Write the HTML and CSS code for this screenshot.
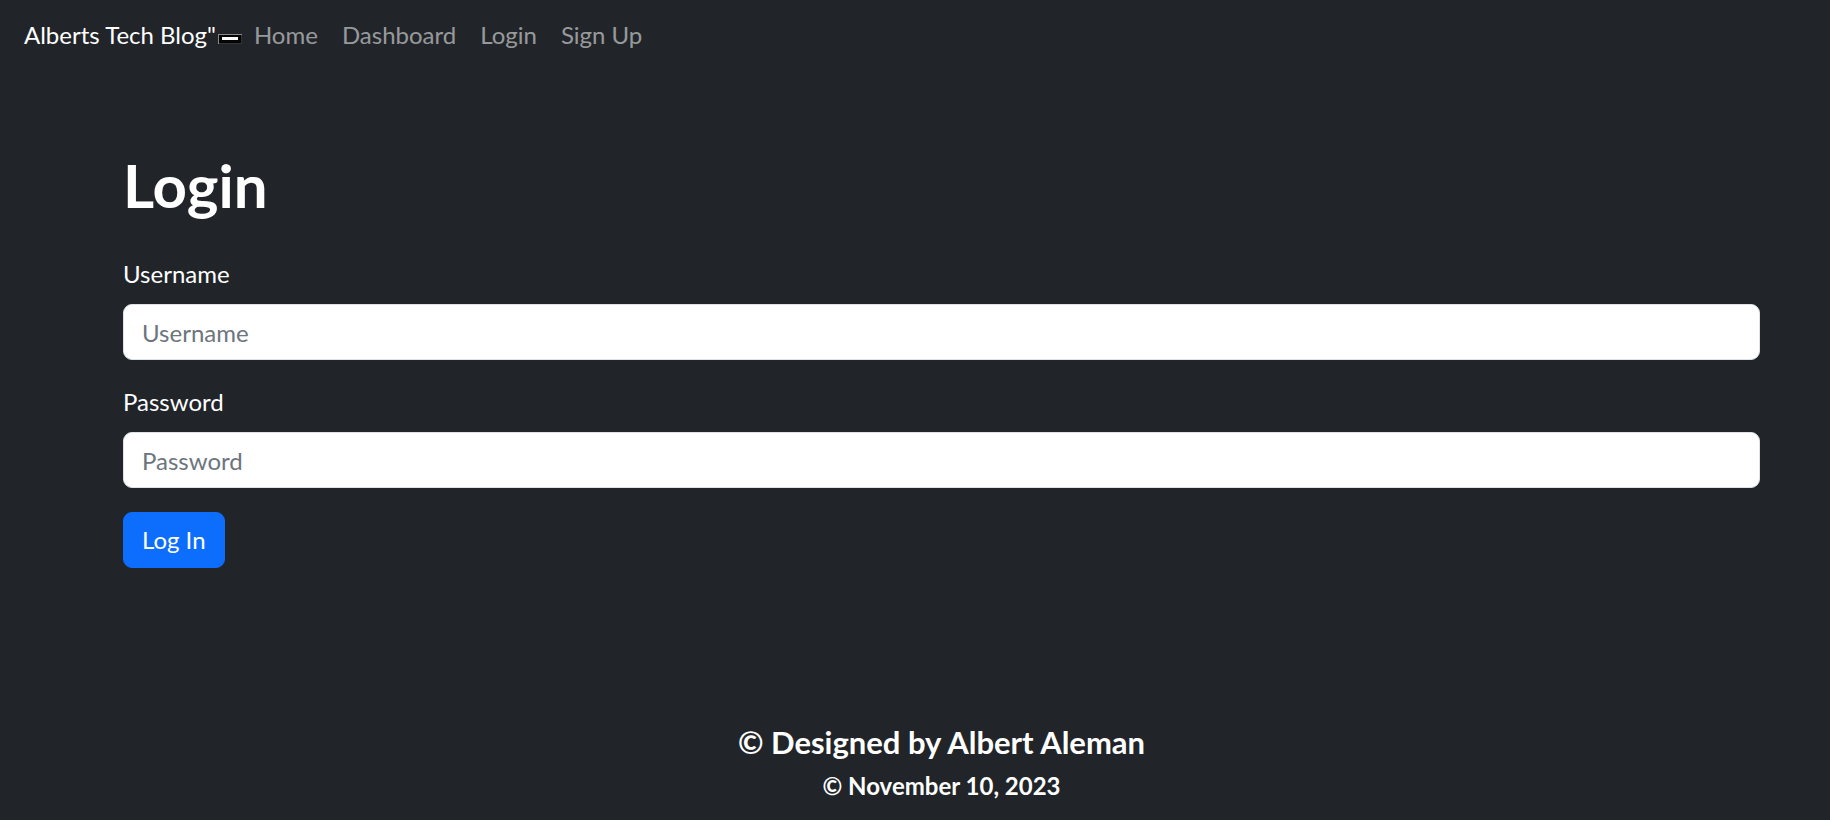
FILE: index.html
```html
<!DOCTYPE html>
<html lang="en">
<head>
<meta charset="utf-8">
<title>Login - Alberts Tech Blog</title>
<link rel="stylesheet" href="styles.css">
</head>
<body>
<nav class="navbar">
  <a class="brand" href="#">Alberts Tech Blog"<span class="brand-img"><span class="brand-bar"></span></span></a>
  <ul class="nav-links">
    <li><a href="#">Home</a></li>
    <li><a href="#">Dashboard</a></li>
    <li><a href="#">Login</a></li>
    <li><a href="#">Sign Up</a></li>
  </ul>
</nav>
<div class="page">
  <main class="content">
    <h1 class="title">Login</h1>
    <form class="form">
      <div class="field">
        <label class="label" for="username">Username</label>
        <input class="input" id="username" type="text" placeholder="Username">
      </div>
      <div class="field">
        <label class="label" for="password">Password</label>
        <input class="input" id="password" type="password" placeholder="Password">
      </div>
      <button class="btn" type="button">Log In</button>
    </form>
  </main>
  <footer class="footer">
    <p class="footer-main">© Designed by Albert Aleman</p>
    <p class="footer-date">© November 10, 2023</p>
  </footer>
</div>
</body>
</html>
```

FILE: styles.css
```css
* { box-sizing: border-box; }
html, body { margin: 0; padding: 0; }
body {
  background: #212529;
  color: #fff;
  font-family: "Lato", "Open Sans", sans-serif;
  font-size: 24px;
  line-height: 1.5;
  height: 820px;
  overflow: hidden;
}
.navbar {
  display: flex;
  align-items: center;
  padding: 17px 0 13px 24px;
}
.brand {
  color: #fff;
  text-decoration: none;
  font-size: 24px;
  line-height: 36px;
  white-space: nowrap;
}
.brand-img {
  display: inline-flex;
  align-items: center;
  justify-content: center;
  width: 24px;
  height: 10px;
  margin-left: 2px;
  background: #050505;
  box-shadow: inset 1px 1px 0 #8a8a8a, inset -1px -1px 0 #333;
  vertical-align: 4px;
}
.brand-bar {
  width: 16px;
  height: 3px;
  background: #fff;
}
.nav-links {
  display: flex;
  list-style: none;
  margin: 0;
  padding: 0;
}
.nav-links a {
  display: block;
  padding: 0 12px;
  color: rgba(255, 255, 255, 0.55);
  text-decoration: none;
  line-height: 36px;
}
.page {
  padding: 83px 70px 0 123px;
}
.title {
  margin: 0 0 35px;
  font-size: 60px;
  line-height: 72px;
  font-weight: 700;
}
.field { margin-bottom: 24px; }
.label {
  display: block;
  margin-bottom: 12px;
  line-height: 36px;
}
.input {
  display: block;
  width: 100%;
  height: 56px;
  padding: 9px 18px;
  font: inherit;
  line-height: 36px;
  color: #212529;
  background: #fff;
  border: 1px solid #dee2e6;
  border-radius: 9px;
}
.input::placeholder { color: #6c757d; }
.btn {
  display: inline-block;
  height: 56px;
  padding: 9px 18px;
  font: inherit;
  line-height: 36px;
  color: #fff;
  background: #0d6efd;
  border: 1px solid #0d6efd;
  border-radius: 9px;
}
.footer {
  margin-top: 156px;
  text-align: center;
  font-weight: 700;
}
.footer p { margin: 0; }
.footer-main {
  font-size: 31px;
  line-height: 36px;
  margin-bottom: 12px !important;
}
.footer-date {
  font-size: 24px;
  line-height: 28.8px;
}
```
